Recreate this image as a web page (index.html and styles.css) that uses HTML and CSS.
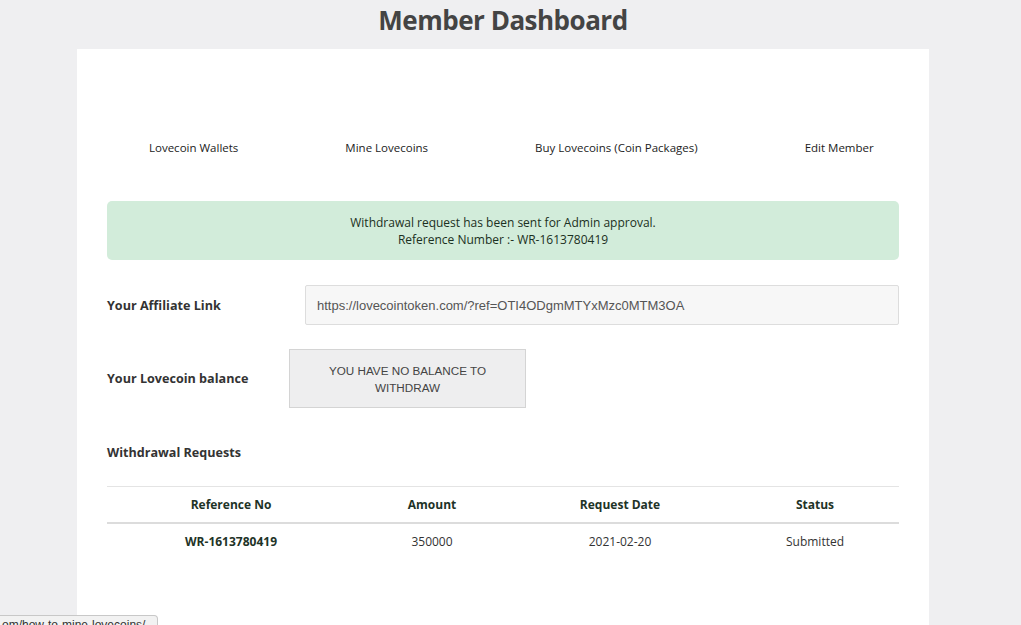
FILE: index.html
```html
<!DOCTYPE html>
<html lang="en">
<head>
  <meta charset="UTF-8">
  <meta name="viewport" content="width=device-width, initial-scale=1.0">
  <title>Member Dashboard</title>
<link rel="stylesheet" href="styles.css">
</head>

<body>
  <h1 class="page-title">Member Dashboard</h1>

  <div class="card">
    <!-- Member menu -->
    <nav class="member-nav">
      <a href="#">Lovecoin Wallets</a>
      <a href="#">Mine Lovecoins</a>
      <a href="#">Buy Lovecoins (Coin Packages)</a>
      <a href="#">Edit Member</a>
    </nav>

    <div class="alert-success">
      Withdrawal request has been sent for Admin approval.<br>
      Reference Number :- WR-1613780419
    </div>

    <div class="form-row">
      <label class="row-label" for="affiliate">Your Affiliate Link</label>
      <input type="text" id="affiliate" class="link-input" value="https://lovecointoken.com/?ref=OTI4ODgmMTYxMzc0MTM3OA" readonly>
    </div>

    <div class="form-row balance-row">
      <span class="row-label">Your Lovecoin balance</span>
      <div class="balance-box">YOU HAVE NO BALANCE TO WITHDRAW</div>
    </div>

    <h4 class="section-title">Withdrawal Requests</h4>

    <table class="requests">
      <thead>
        <tr>
          <th class="col-ref">Reference No</th>
          <th class="col-amount">Amount</th>
          <th class="col-date">Request Date</th>
          <th class="col-status">Status</th>
        </tr>
      </thead>
      <tbody>
        <tr>
          <td class="ref-no">WR-1613780419</td>
          <td>350000</td>
          <td>2021-02-20</td>
          <td>Submitted</td>
        </tr>
      </tbody>
    </table>
  </div>

  <div class="status-bubble">om/how-to-mine-lovecoins/</div>
</body>
</html>
```

FILE: styles.css
```css
/* General Body Styles */
body {
  font-family: "Open Sans", Arial, sans-serif;
  background-color: #efeff1;
  color: #333;
  margin: 0;
  padding: 0 15px 0 0;
}

.page-title {
  margin: 2px 0 11px;
  text-align: center;
  font-size: 26px;
  line-height: 36px;
  font-weight: 700;
  color: #444;
  letter-spacing: -0.5px;
}

.card {
  width: 852px;
  margin: 0 auto;
  box-sizing: border-box;
  padding: 90px 30px 70px;
  background-color: #fff;
}

/* Member menu */
.member-nav {
  display: flex;
  gap: 107px;
  padding-left: 42px;
  font-size: 11.5px;
  line-height: 18px;
}

.member-nav a {
  color: #222;
  text-decoration: none;
}

.alert-success {
  margin-top: 44px;
  padding: 13px 20px 12px;
  background-color: #d2ecda;
  border-radius: 5px;
  text-align: center;
  font-size: 12px;
  line-height: 17px;
  color: #1b3022;
}

.form-row {
  display: flex;
  align-items: center;
  margin-top: 25px;
}

.row-label {
  width: 198px;
  flex-shrink: 0;
  font-size: 12.6px;
  font-weight: 700;
  color: #333;
}

.link-input {
  flex: 1;
  height: 40px;
  box-sizing: border-box;
  padding: 0 11px;
  border: 1px solid #ddd;
  border-radius: 2px;
  background-color: #f7f7f7;
  font-family: "Liberation Sans", Arial, sans-serif;
  font-size: 13px;
  color: #555;
}

.balance-row {
  margin-top: 24px;
}

.balance-row .row-label {
  width: 182px;
}

.balance-box {
  width: 237px;
  height: 59px;
  box-sizing: border-box;
  padding: 12px 30px;
  border: 1px solid #d4d4d4;
  background-color: #eeeeef;
  text-align: center;
  font-family: "Liberation Sans", Arial, sans-serif;
  font-size: 11.7px;
  line-height: 17px;
  color: #444;
}

.section-title {
  margin: 36px 0 24px;
  font-size: 12.6px;
  line-height: 18px;
  font-weight: 700;
  color: #333;
}

/* Withdrawal table */
.requests {
  width: 100%;
  border-collapse: collapse;
  font-size: 12px;
  text-align: center;
}

.requests th {
  height: 35px;
  padding: 0;
  border-top: 1px solid #e4e4e4;
  border-bottom: 2px solid #dcdcdc;
  font-weight: 700;
  color: #1e3327;
}

.requests td {
  height: 34px;
  padding: 0;
  color: #333;
}

.requests .ref-no {
  font-weight: 700;
  color: #1e3327;
}

.col-ref { width: 248px; }
.col-amount { width: 154px; }
.col-date { width: 222px; }
.col-status { width: 168px; }

/* browser status bubble */
.status-bubble {
  position: fixed;
  left: 0;
  bottom: -9px;
  width: 158px;
  height: 19px;
  padding-left: 2px;
  box-sizing: border-box;
  background-color: #f2f2f2;
  border: 1px solid #c8c8c8;
  border-left: none;
  border-radius: 0 4px 0 0;
  font-family: "Liberation Sans", Arial, sans-serif;
  font-size: 12px;
  line-height: 19px;
  color: #333;
  white-space: nowrap;
  overflow: hidden;
}
```
